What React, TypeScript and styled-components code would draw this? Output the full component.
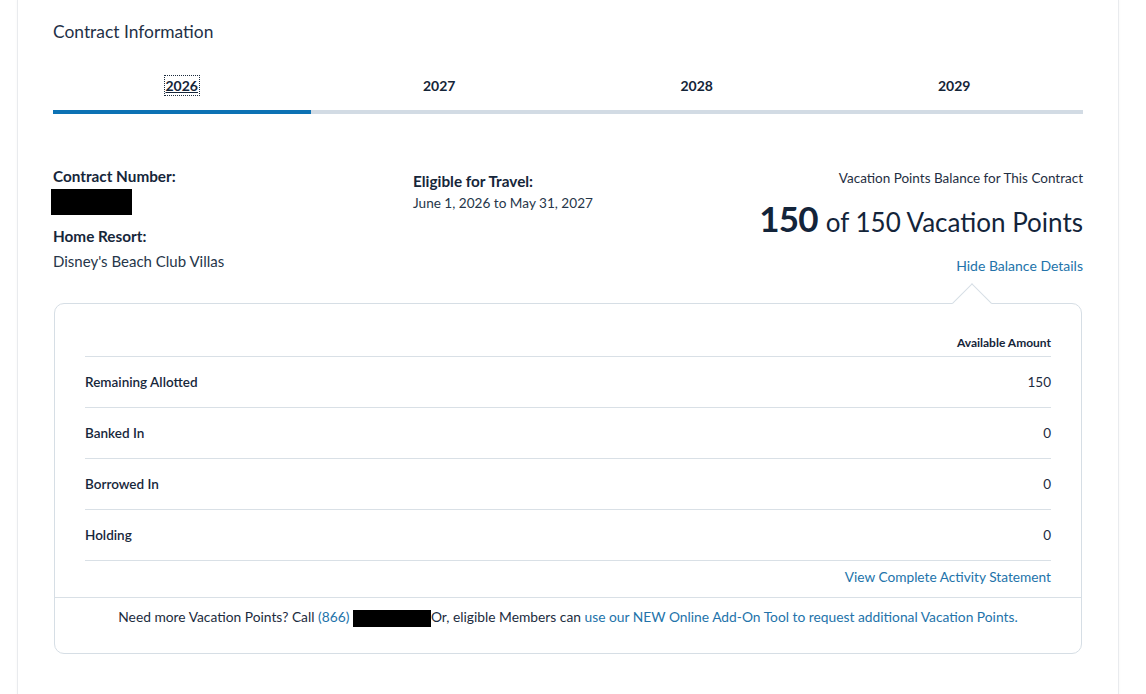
import React, { useState } from "react";
import styled, { createGlobalStyle } from "styled-components";

const GlobalStyle = createGlobalStyle`
  html, body {
    margin: 0;
    padding: 0;
    background: #ffffff;
  }
  body {
    font-family: Lato, "Noto Sans", "Liberation Sans", sans-serif;
    color: #1d2e42;
  }
  * { box-sizing: border-box; }
`;

const Page = styled.div`
  padding: 0 27px 0 17px;
`;

const Card = styled.section`
  background: #fff;
  border-left: 1px solid #e9ebee;
  border-right: 1px solid #e9ebee;
  box-shadow: 0 0 3px rgba(0, 0, 0, 0.04);
  padding: 19px 35px 60px 35px;
  min-height: 720px;
`;

const Title = styled.h2`
  margin: 0;
  font-size: 17.4px;
  line-height: 26px;
  font-weight: 400;
  color: #1f3147;
`;

const Tabs = styled.div`
  margin-top: 15px;
  display: grid;
  grid-template-columns: repeat(4, 1fr);
`;

const Tab = styled.button<{ $active: boolean }>`
  appearance: none;
  background: none;
  border: 0;
  border-bottom: 4px solid ${(p) => (p.$active ? "#0d72b4" : "#d2dbe4")};
  padding: 16px 0 14px;
  font-family: inherit;
  font-size: 14px;
  line-height: 20px;
  font-weight: 700;
  color: #152538;
  cursor: pointer;
`;

const TabLabel = styled.span<{ $active: boolean }>`
  text-decoration: ${(p) => (p.$active ? "underline" : "none")};
  outline: ${(p) => (p.$active ? "1px dotted #1b2b3d" : "none")};
  outline-offset: 1px;
`;

const Info = styled.div`
  margin-top: 52px;
  display: grid;
  grid-template-columns: 360px 1fr auto;
  align-items: start;
`;

const Column = styled.div<{ $offset?: number; $right?: boolean }>`
  display: flex;
  flex-direction: column;
  align-items: ${(p) => (p.$right ? "flex-end" : "flex-start")};
  padding-top: ${(p) => p.$offset ?? 0}px;
`;

const Label = styled.div<{ $gap?: number }>`
  font-size: 15.3px;
  line-height: 20px;
  font-weight: 700;
  color: #16263a;
  margin-top: ${(p) => p.$gap ?? 0}px;
`;

const Value = styled.div<{ $gap?: number; $size?: number }>`
  font-size: ${(p) => p.$size ?? 15}px;
  line-height: 20px;
  color: #263649;
  margin-top: ${(p) => p.$gap ?? 0}px;
`;

const Redacted = styled.span<{ $w: number; $h: number }>`
  display: inline-block;
  width: ${(p) => p.$w}px;
  height: ${(p) => p.$h}px;
  background: #000;
  vertical-align: middle;
`;

const ContractRedacted = styled(Redacted)`
  margin: 3px 0 0 -2px;
`;

const BalanceCaption = styled.div`
  font-size: 13.5px;
  line-height: 20px;
  color: #1f2f43;
`;

const BalanceFigure = styled.div`
  margin-top: 6px;
  line-height: 48px;
  color: #13243a;
  white-space: nowrap;
`;

const BigNumber = styled.span`
  font-size: 35px;
  font-weight: 700;
  letter-spacing: -0.8px;
`;

const BalanceRest = styled.span`
  font-size: 26px;
  font-weight: 400;
  margin-left: 8px;
`;

const Link = styled.a<{ $gap?: number }>`
  color: #2373aa;
  text-decoration: none;
  cursor: pointer;
  margin-top: ${(p) => p.$gap ?? 0}px;
`;

const ToggleLink = styled(Link)`
  font-size: 14px;
  line-height: 20px;
`;

const Panel = styled.div`
  position: relative;
  margin: 27px 1px 0;
  border: 1px solid #d6dee5;
  border-radius: 10px;
  background: #fff;
`;

const Caret = styled.span`
  position: absolute;
  top: -15px;
  right: 95px;
  width: 28px;
  height: 28px;
  background: #fff;
  border-top: 1px solid #d6dee5;
  border-left: 1px solid #d6dee5;
  transform: rotate(45deg);
`;

const Table = styled.div`
  padding: 0 30px;
`;

const HeadRow = styled.div`
  display: flex;
  justify-content: flex-end;
  padding: 31px 0 5px;
  border-bottom: 1px solid #d9e0e6;
  font-size: 12px;
  line-height: 16px;
  font-weight: 700;
  color: #15253a;
`;

const Row = styled.div`
  display: flex;
  justify-content: space-between;
  align-items: center;
  height: 51px;
  border-bottom: 1px solid #d9e0e6;
  font-size: 13.5px;
  line-height: 20px;
  color: #1c2c40;
`;

const RowLabel = styled.span`
  font-weight: 600;
  color: #17273b;
`;

const RowValue = styled.span`
  font-weight: 400;
`;

const StatementRow = styled.div`
  display: flex;
  justify-content: flex-end;
  padding: 6px 0 10px;
  font-size: 13.7px;
  line-height: 20px;
`;

const Footer = styled.div`
  border-top: 1px solid #d9e0e6;
  padding: 9px 20px 26px;
  text-align: center;
  font-size: 13.8px;
  line-height: 20px;
  color: #1c2c40;
`;

const balances = [
  { label: "Remaining Allotted", amount: 150 },
  { label: "Banked In", amount: 0 },
  { label: "Borrowed In", amount: 0 },
  { label: "Holding", amount: 0 },
];

const years = ["2026", "2027", "2028", "2029"];

export default function App() {
  const [year, setYear] = useState("2026");
  const [open, setOpen] = useState(true);

  return (
    <>
      <GlobalStyle />
      <Page>
        <Card>
          <Title>Contract Information</Title>
          <Tabs>
            {years.map((y) => (
              <Tab key={y} $active={y === year} onClick={() => setYear(y)}>
                <TabLabel $active={y === year}>{y}</TabLabel>
              </Tab>
            ))}
          </Tabs>

          <Info>
            <Column>
              <Label>Contract Number:</Label>
              <ContractRedacted $w={81} $h={26} />
              <Label $gap={11}>Home Resort:</Label>
              <Value $gap={5}>Disney's Beach Club Villas</Value>
            </Column>
            <Column $offset={5}>
              <Label>Eligible for Travel:</Label>
              <Value $gap={2} $size={13.6}>
                June 1, 2026 to May 31, 2027
              </Value>
            </Column>
            <Column $offset={2} $right>
              <BalanceCaption>Vacation Points Balance for This Contract</BalanceCaption>
              <BalanceFigure>
                <BigNumber>150</BigNumber>
                <BalanceRest>of 150 Vacation Points</BalanceRest>
              </BalanceFigure>
              <ToggleLink $gap={6} onClick={() => setOpen(!open)}>
                {open ? "Hide Balance Details" : "Show Balance Details"}
              </ToggleLink>
            </Column>
          </Info>

          {open && (
            <Panel>
              <Caret />
              <Table>
                <HeadRow>Available Amount</HeadRow>
                {balances.map((b) => (
                  <Row key={b.label}>
                    <RowLabel>{b.label}</RowLabel>
                    <RowValue>{b.amount}</RowValue>
                  </Row>
                ))}
                <StatementRow>
                  <Link>View Complete Activity Statement</Link>
                </StatementRow>
              </Table>
              <Footer>
                Need more Vacation Points? Call <Link>(866)</Link>{" "}
                <Redacted $w={78} $h={17} />
                Or, eligible Members can{" "}
                <Link>use our NEW Online Add-On Tool to request additional Vacation Points.</Link>
              </Footer>
            </Panel>
          )}
        </Card>
      </Page>
    </>
  );
}
